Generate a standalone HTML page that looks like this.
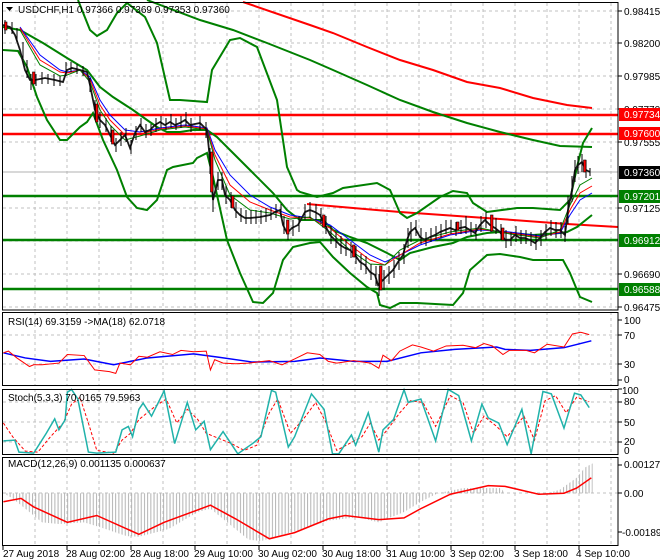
<!DOCTYPE html>
<html><head><meta charset="utf-8"><style>
html,body{margin:0;padding:0;background:#fff;width:660px;height:560px;overflow:hidden}
svg{display:block;font-family:"Liberation Sans",sans-serif}
text{font-size:10px;fill:#000}
</style></head><body>
<svg width="660" height="560" viewBox="0 0 660 560" xmlns="http://www.w3.org/2000/svg">
<defs>
<pattern id="hb" patternUnits="userSpaceOnUse" width="7.6" height="10"><rect x="0" y="0" width="2.4" height="10" fill="#b4b4b4"/></pattern>
</defs>
<rect width="660" height="560" fill="#fff"/>
<g stroke="#c0c0c0" stroke-dasharray="3,3" stroke-width="1">
<path d="M35 3V310M67 3V310M99 3V310M131 3V310M163 3V310M195 3V310M227 3V310M259 3V310M291 3V310M323 3V310M355 3V310M387 3V310M419 3V310M451 3V310M483 3V310M515 3V310M547 3V310M579 3V310M611 3V310"/>
<path d="M3 11H618M3 43H618M3 76H618M3 109H618M3 142H618M3 208H618M3 241H618M3 274H618M3 307H618"/>
<path d="M35 312V386M67 312V386M99 312V386M131 312V386M163 312V386M195 312V386M227 312V386M259 312V386M291 312V386M323 312V386M355 312V386M387 312V386M419 312V386M451 312V386M483 312V386M515 312V386M547 312V386M579 312V386M611 312V386"/>
<path d="M3 335H618M3 364H618"/>
<path d="M35 389V454M67 389V454M99 389V454M131 389V454M163 389V454M195 389V454M227 389V454M259 389V454M291 389V454M323 389V454M355 389V454M387 389V454M419 389V454M451 389V454M483 389V454M515 389V454M547 389V454M579 389V454M611 389V454"/>
<path d="M3 402H618M3 422H618M3 442H618"/>
<path d="M35 457V545M67 457V545M99 457V545M131 457V545M163 457V545M195 457V545M227 457V545M259 457V545M291 457V545M323 457V545M355 457V545M387 457V545M419 457V545M451 457V545M483 457V545M515 457V545M547 457V545M579 457V545M611 457V545"/>
<path d="M3 493H618"/>
</g>
<line x1="3" y1="172" x2="618" y2="172" stroke="#b0b0b0"/>
<g stroke-width="2.5" fill="none">
<path d="M3 115H618M3 134H618" stroke="#ff0000"/>
<path d="M3 196H618M3 240H618M3 289H618" stroke="#008000"/>
</g>
<polyline fill="none" stroke="#ff0000" stroke-width="2" points="243,2 310,25 333,33 367,47 400,60 433,70 467,82 500,88 533,98 567,105 592,108"/>
<polyline fill="none" stroke="#ff0000" stroke-width="2" points="307,204 400,212 500,219 567,224 618,227"/>
<polyline fill="none" stroke="#008000" stroke-width="2" points="147,0 200,20 233,30 267,43 310,60 333,70 367,85 400,100 433,112 467,123 500,132 533,140 560,146 592,147"/>
<g fill="none" stroke="#008000" stroke-width="2">
<polyline points="78,0 90,30 97,36 107,30 117,13 127,3 145,17 157,43 170,100 180,100 207,102 212,70 230,40 240,38 257,47 277,100 287,167 297,190 300,192 317,197 333,193 343,188 377,183 390,190 400,213 407,218 417,213 440,197 453,191 467,193 473,203 487,212 517,208 533,208 560,210 570,200 577,167 583,143 592,128"/>
<polyline points="3,50 18,51 27,67 37,97 47,120 60,140 67,140 80,127 87,122 93,113 103,140 117,170 127,197 137,208 147,210 157,200 167,170 173,167 193,163 197,158 207,153 213,177 227,240 240,273 253,302 263,303 273,293 283,260 293,247 310,243 320,242 333,257 350,273 367,287 377,293 380,305 390,308 400,303 417,303 453,305 463,293 470,270 487,255 500,254 520,257 533,260 563,260 570,273 577,290 580,297 592,302"/>
<polyline points="3,27 20,30 43,43 67,58 87,70 100,87 113,97 133,110 147,120 157,127 167,132 180,132 193,130 207,130 217,137 233,153 253,173 273,193 287,210 300,220 323,220 333,230 350,237 367,243 387,253 400,260 410,253 433,247 453,243 467,237 487,233 500,232 533,235 560,233 567,232 577,227 592,215"/>
</g>
<polyline fill="none" stroke="#0000ff" stroke-width="1" points="20,27 40,55 60,70 67,72 80,70 90,77 100,100 110,115 125,130 140,132 160,128 185,125 207,128 215,150 230,175 250,195 270,207 290,215 310,218 330,225 350,240 370,255 385,262 400,255 420,245 450,235 480,230 510,232 540,236 560,233 570,215 580,200 592,193"/>
<polyline fill="none" stroke="#ff0000" stroke-width="1" points="20,28 40,60 60,72 67,73 80,70 90,79 100,105 110,120 125,135 140,134 160,129 185,126 207,129 215,155 230,185 250,202 270,210 290,217 310,218 330,228 350,245 370,260 385,265 400,255 420,243 450,234 480,229 510,233 540,237 560,232 570,210 580,193 592,186"/>
<polyline fill="none" stroke="#008000" stroke-width="1" points="20,30 40,65 60,76 67,75 80,70 90,82 100,110 110,125 125,140 140,136 160,130 185,127 207,130 215,160 230,195 250,210 270,213 290,219 310,217 330,232 350,250 370,264 385,265 400,250 420,240 450,232 480,228 510,234 540,238 560,230 570,205 580,185 592,178"/>
<!-- price: body line + wicks -->
<polyline fill="none" stroke="#1a1a1a" stroke-width="1.8" points="3,25 10,27 15,35 20,50 25,70 30,80 35,80 45,78 55,80 63,82 67,70 72,68 80,70 87,72 90,85 95,110 100,120 105,125 110,135 115,145 120,140 125,135 130,148 135,133 140,125 145,132 150,130 155,125 160,122 165,125 170,122 175,125 180,123 185,120 190,125 200,123 207,130 210,160 213,200 218,180 222,180 225,195 230,200 235,210 240,215 245,218 250,218 260,217 270,215 275,212 280,210 283,225 287,233 292,228 298,225 305,212 310,210 315,212 320,215 325,225 330,235 335,240 340,245 345,248 350,250 355,255 360,262 365,265 370,272 375,275 378,285 383,280 388,275 393,270 398,262 403,255 407,240 410,232 415,228 420,237 425,240 430,237 435,235 440,232 450,228 455,230 460,228 465,227 470,230 475,233 480,225 485,220 490,225 495,228 500,232 505,240 510,240 515,235 520,238 525,238 530,240 535,243 540,238 545,232 550,228 555,230 560,230 565,235 568,210 572,190 575,170 578,165 582,162 586,170 590,172"/>
<path stroke="#000" stroke-width="1" fill="none" d="M5 20v14M12 22v12M17 28v14M23 42v18M27 60v18M31 74v16M36 74v12M42 72v12M48 74v10M54 74v12M60 76v10M66 62v14M71 62v10M77 64v10M83 66v10M90 78v14M95 100v20M100 112v16M106 118v14M111 126v16M116 138v14M121 132v14M126 128v14M131 140v14M136 126v14M141 118v14M146 124v14M151 124v12M156 118v14M161 116v12M166 118v12M171 114v14M176 118v12M181 116v12M186 112v14M191 118v14M200 116v14M206 122v16M210 148v26M213 180v32M218 172v18M222 172v18M226 186v18M231 192v16M236 202v16M241 208v14M246 210v14M251 210v14M256 210v14M261 210v14M266 208v14M271 208v12M276 204v14M281 204v14M284 216v18M288 224v16M293 220v16M299 216v16M305 204v16M310 202v16M316 204v16M321 208v16M326 216v18M331 226v18M336 232v16M341 236v18M346 240v16M351 242v16M356 246v18M361 254v16M366 256v18M371 264v16M376 266v20M379 274v22M384 270v20M389 266v18M394 260v18M399 252v18M404 244v20M408 228v20M411 222v20M416 220v16M421 228v16M426 232v14M431 228v14M436 226v14M441 224v14M446 220v14M451 220v14M456 222v14M461 220v14M466 216v18M471 222v14M476 224v16M481 216v16M486 212v16M491 216v16M496 218v16M501 224v16M506 230v18M511 232v14M516 226v16M521 230v14M526 230v14M531 232v14M536 234v16M541 230v16M546 224v16M551 220v16M556 222v16M561 222v16M565 226v16M568 196v28M572 176v26M575 160v22M578 156v18M582 154v18M586 160v18M590 168v8"/>
<g fill="#ff0000" stroke="#000" stroke-width="0.6">
<rect x="4.5" y="22" width="2.5" height="8"/><rect x="32.5" y="72" width="2.5" height="12"/><rect x="95.5" y="104" width="2.5" height="18"/><rect x="111.5" y="130" width="2.5" height="14"/><rect x="210.5" y="152" width="2.5" height="40"/><rect x="231.5" y="196" width="2.5" height="12"/><rect x="286.5" y="220" width="2.5" height="14"/><rect x="322.5" y="215" width="2.5" height="12"/><rect x="352.5" y="245" width="2.5" height="12"/><rect x="379.5" y="266" width="2.5" height="24"/><rect x="456.5" y="222" width="2.5" height="8"/><rect x="490.5" y="215" width="2.5" height="16"/><rect x="501.5" y="228" width="2.5" height="12"/><rect x="583.5" y="160" width="2.5" height="12"/>
</g>
<path d="M6 7h7l-3.5 4z" fill="#000"/>
<text x="18" y="13">USDCHF,H1  0.97366 0.97369 0.97353 0.97360</text>
<g transform="translate(0,310) scale(0.42088,0.34247)" fill="none">
<polyline vector-effect="non-scaling-stroke" stroke="#0000ff" stroke-width="1.5" points="8,125 60,140 120,150 200,143 270,160 350,140 460,128 520,138 600,152 700,150 760,140 840,150 920,150 1000,125 1080,115 1180,108 1200,115 1260,118 1340,110 1405,90"/>
<polyline vector-effect="non-scaling-stroke" stroke="#ff0000" stroke-width="1" points="8,125 20,120 40,140 70,165 80,160 100,160 140,155 160,130 200,133 225,175 260,180 275,185 285,155 310,160 330,135 350,138 380,122 410,130 430,118 460,122 490,120 500,175 510,145 530,155 560,157 590,155 640,148 670,160 700,143 730,125 760,130 780,150 800,155 840,148 880,155 900,170 910,132 930,148 950,120 980,102 1000,108 1030,120 1060,105 1100,103 1130,110 1150,98 1170,105 1195,130 1210,118 1250,118 1270,125 1300,100 1340,108 1360,70 1380,65 1400,72"/>
<polyline vector-effect="non-scaling-stroke" stroke="#ff0000" stroke-width="1" stroke-dasharray="3,2" points="8,330 30,370 60,412 90,415 120,370 150,330 170,275 190,255 210,330 230,410 270,418 290,380 310,360 330,320 350,300 370,280 395,260 420,330 445,290 470,320 490,360 520,375 550,390 580,410 610,395 640,300 660,260 690,360 720,320 750,270 775,330 800,410 830,390 860,370 880,330 900,380 920,350 950,300 975,265 1005,270 1035,340 1070,250 1100,270 1125,360 1150,310 1180,340 1205,370 1245,310 1270,380 1295,265 1320,250 1345,300 1370,255 1400,268"/>
<polyline vector-effect="non-scaling-stroke" stroke="#20b2aa" stroke-width="1.5" points="8,382 35,380 45,415 80,418 110,360 130,318 140,350 155,320 160,240 170,232 185,260 210,415 230,418 275,415 290,350 305,340 315,370 330,290 340,272 360,310 390,236 415,390 445,270 465,350 485,325 500,408 530,355 565,420 600,390 620,370 645,235 655,240 685,400 700,370 740,245 770,290 790,420 805,420 835,365 845,395 875,300 900,415 910,350 935,320 960,233 970,270 1000,260 1035,382 1065,232 1090,250 1120,382 1145,275 1160,315 1185,330 1205,393 1240,290 1262,420 1290,238 1310,245 1340,345 1365,243 1380,248 1400,285"/>
<polygon fill="url(#hb)" points="8,535 30,550 60,580 100,620 140,625 200,620 240,635 300,660 330,662 400,640 470,590 500,580 540,620 590,670 620,675 660,660 720,640 780,615 850,605 900,620 960,590 1000,560 1040,535 1060,530 1100,520 1190,520 1200,535 1300,535 1330,525 1370,490 1390,460 1408,448 1408,535"/>
<polyline vector-effect="non-scaling-stroke" stroke="#ff0000" stroke-width="1.5" points="8,560 50,550 80,575 160,620 230,600 330,655 390,620 500,570 560,610 640,668 700,650 780,610 820,600 900,612 960,607 1000,580 1070,538 1160,513 1200,515 1280,538 1340,535 1370,520 1405,490"/>
</g>
<g fill="none" stroke="#000" stroke-width="1">
<rect x="2.5" y="2.5" width="615.5" height="307.5"/>
<rect x="2.5" y="312.5" width="615.5" height="73"/>
<rect x="2.5" y="389.5" width="615.5" height="65"/>
<rect x="2.5" y="457.5" width="615.5" height="88"/>
</g>
<g stroke="#000"><path d="M3 546v4M67 546v4M131 546v4M195 546v4M259 546v4M323 546v4M387 546v4M451 546v4M515 546v4M579 546v4"/>
<path d="M618 11h4M618 43h4M618 76h4M618 109h4M618 142h4M618 208h4M618 274h4M618 307h4M618 320h4M618 335h4M618 364h4M618 380h4M618 389h4M618 402h4M618 422h4M618 442h4M618 465h4M618 493h4M618 532h4"/></g>
<g>
<text x="624" y="15">0.98415</text><text x="624" y="47">0.98200</text><text x="624" y="80">0.97985</text><text x="624" y="113">0.97770</text><text x="624" y="146">0.97555</text><text x="624" y="212">0.97125</text><text x="624" y="278">0.96690</text><text x="624" y="311">0.96475</text>
<rect x="619" y="108" width="41" height="13" fill="#ff0000"/><text x="624" y="118" style="fill:#fff">0.97734</text>
<rect x="619" y="127" width="41" height="13" fill="#ff0000"/><text x="624" y="137" style="fill:#fff">0.97600</text>
<rect x="619" y="166" width="41" height="13" fill="#000"/><text x="624" y="176" style="fill:#fff">0.97360</text>
<rect x="619" y="190" width="41" height="13" fill="#008000"/><text x="624" y="200" style="fill:#fff">0.97201</text>
<rect x="619" y="234" width="41" height="13" fill="#008000"/><text x="624" y="244" style="fill:#fff">0.96912</text>
<rect x="619" y="283" width="41" height="13" fill="#008000"/><text x="624" y="293" style="fill:#fff">0.96588</text>
<text x="624" y="324">100</text><text x="624" y="339">70</text><text x="624" y="368">30</text><text x="624" y="383">0</text>
<text x="622" y="394">100</text><text x="624" y="405">80</text><text x="624" y="426">50</text><text x="624" y="445">20</text><text x="624" y="454">0</text>
<text x="624" y="468">0.001279</text><text x="624" y="497">0.00</text><text x="622" y="536">-0.001892</text>
</g>
<text x="8" y="325">RSI(14) 69.3159  -&gt;MA(18) 62.0718</text>
<text x="8" y="401">Stoch(5,3,3) 70.0165 79.5963</text>
<text x="8" y="467">MACD(12,26,9) 0.001135 0.000637</text>
<g>
<text x="3" y="557">27 Aug 2018</text><text x="66" y="557">28 Aug 02:00</text><text x="130" y="557">28 Aug 18:00</text><text x="194" y="557">29 Aug 10:00</text><text x="258" y="557">30 Aug 02:00</text><text x="322" y="557">30 Aug 18:00</text><text x="386" y="557">31 Aug 10:00</text><text x="450" y="557">3 Sep 02:00</text><text x="514" y="557">3 Sep 18:00</text><text x="576" y="557">4 Sep 10:00</text>
</g>
</svg>
</body></html>
